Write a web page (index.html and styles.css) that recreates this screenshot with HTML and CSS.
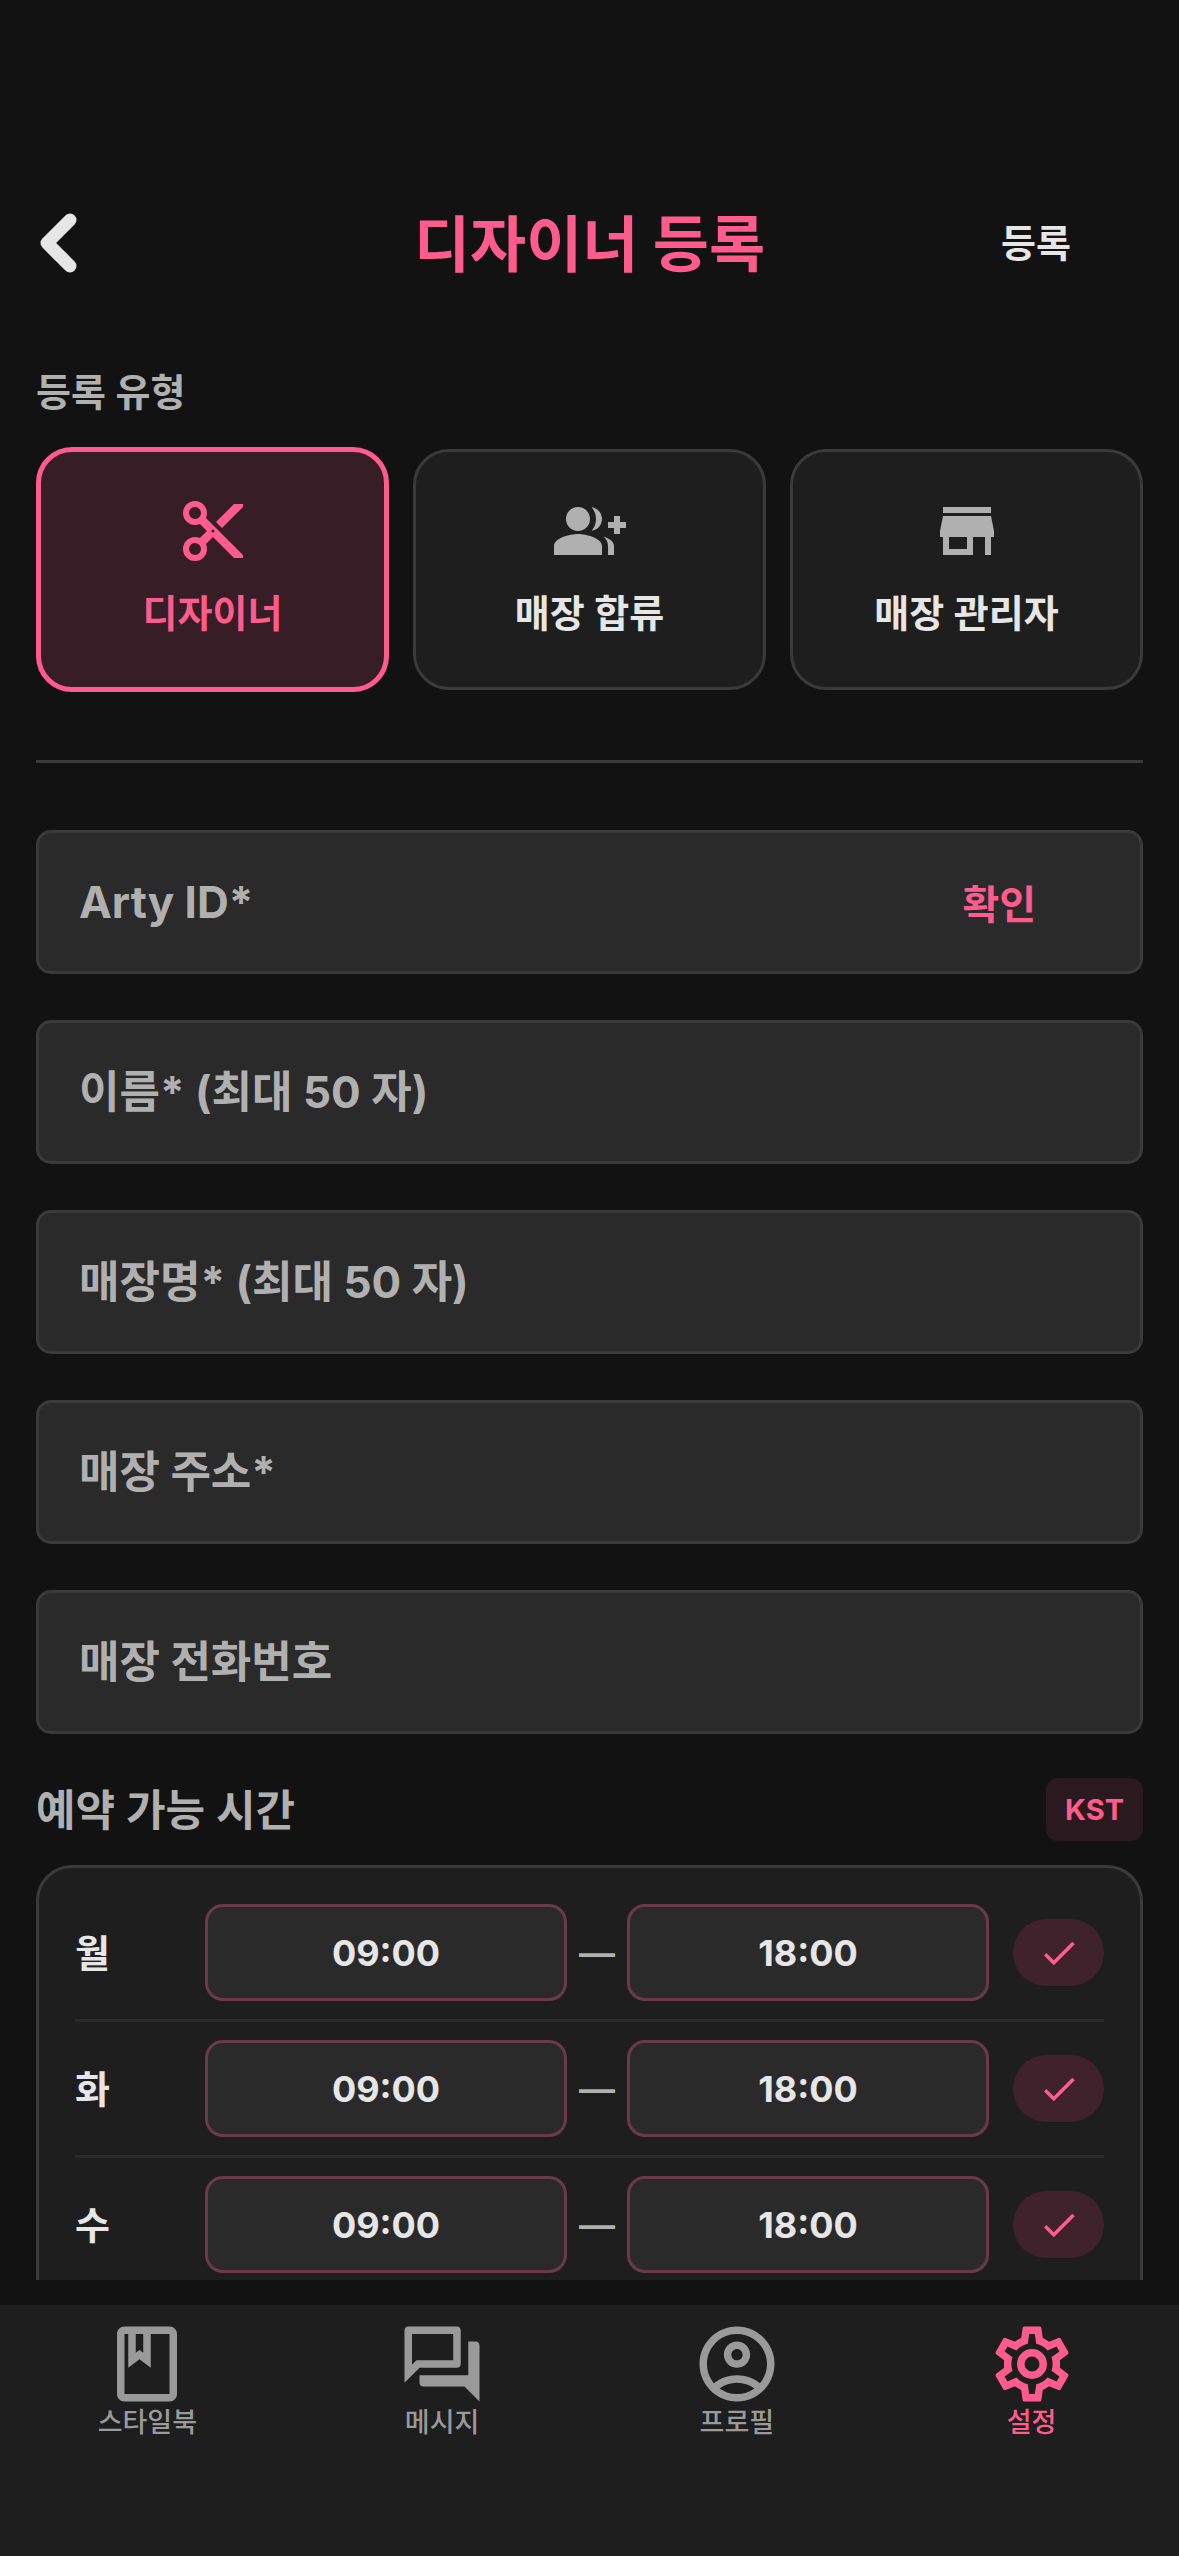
FILE: index.html
```html
<!DOCTYPE html>
<html lang="ko">
<head>
    <meta charset="UTF-8">
    <meta name="viewport" content="width=device-width, initial-scale=1.0">
    <title>디자이너 등록</title>
    <link rel="stylesheet" href="styles.css">
</head>
<body>
    <header class="header">
        <button type="button" class="back-button" aria-label="뒤로">
            <svg viewBox="0 0 38 60"><path d="M31 7L8 30L31 53"/></svg>
        </button>
        <h1>디자이너 등록</h1>
        <button type="submit" form="register-form" class="submit-button">등록</button>
    </header>

    <main>
        <form id="register-form">
            <fieldset class="types">
                <legend>등록 유형</legend>
                <div class="type-list">
                    <label class="type-card">
                        <input type="radio" name="type" class="hidden-input" checked>
                        <svg viewBox="0 0 24 24"><path d="M19,3L13,9L15,11L22,4V3M12,12.5A0.5,0.5 0 0,1 11.5,12A0.5,0.5 0 0,1 12,11.5A0.5,0.5 0 0,1 12.5,12A0.5,0.5 0 0,1 12,12.5M6,20A2,2 0 0,1 4,18C4,16.89 4.9,16 6,16A2,2 0 0,1 8,18C8,19.11 7.1,20 6,20M6,8A2,2 0 0,1 4,6C4,4.89 4.9,4 6,4A2,2 0 0,1 8,6C8,7.11 7.1,8 6,8M9.64,7.64C9.87,7.14 10,6.59 10,6A4,4 0 0,0 6,2A4,4 0 0,0 2,6A4,4 0 0,0 6,10C6.59,10 7.14,9.87 7.64,9.64L10,12L7.64,14.36C7.14,14.13 6.59,14 6,14A4,4 0 0,0 2,18A4,4 0 0,0 6,22A4,4 0 0,0 10,18C10,17.41 9.87,16.86 9.64,16.36L12,14L19,21H22V20L9.64,7.64Z"/></svg>
                        <span>디자이너</span>
                    </label>
                    <label class="type-card">
                        <input type="radio" name="type" class="hidden-input">
                        <svg viewBox="0 0 24 24"><path d="M22 9V7h-2v2h-2v2h2v2h2v-2h2V9zM8 12c2.21 0 4-1.79 4-4s-1.79-4-4-4-4 1.79-4 4 1.79 4 4 4zM8 13c-2.67 0-8 1.34-8 4v3h16v-3c0-2.66-5.33-4-8-4zM12.51 4.05C13.43 5.11 14 6.49 14 8s-.57 2.89-1.49 3.95C14.47 11.7 16 10.04 16 8s-1.53-3.7-3.49-3.95zM16.53 13.83C17.42 14.66 18 15.7 18 17v3h2v-3c0-1.45-1.59-2.51-3.47-3.17z"/></svg>
                        <span>매장 합류</span>
                    </label>
                    <label class="type-card">
                        <input type="radio" name="type" class="hidden-input">
                        <svg viewBox="0 0 24 24"><path d="M20 4H4v2h16V4zm1 10v-2l-1-5H4l-1 5v2h1v6h10v-6h4v6h2v-6h1zm-9 4H6v-4h6v4z"/></svg>
                        <span>매장 관리자</span>
                    </label>
                </div>
            </fieldset>

            <hr>

            <div class="fields">
                <div class="field">
                    <input type="text" placeholder="Arty ID*" aria-label="Arty ID">
                    <button type="button" class="check-button">확인</button>
                </div>
                <div class="field">
                    <input type="text" placeholder="이름* (최대 50 자)" aria-label="이름" maxlength="50">
                </div>
                <div class="field">
                    <input type="text" placeholder="매장명* (최대 50 자)" aria-label="매장명" maxlength="50">
                </div>
                <div class="field">
                    <input type="text" placeholder="매장 주소*" aria-label="매장 주소">
                </div>
                <div class="field">
                    <input type="tel" placeholder="매장 전화번호" aria-label="매장 전화번호">
                </div>
            </div>

            <div class="section-head">
                <h2>예약 가능 시간</h2>
                <span class="badge">KST</span>
            </div>

            <div class="hours">
                <div class="hours-row">
                    <span class="day">월</span>
                    <button type="button" class="time">09:00</button>
                    <span class="dash">—</span>
                    <button type="button" class="time">18:00</button>
                    <label class="toggle">
                        <input type="checkbox" class="hidden-input" aria-label="월" checked>
                        <svg viewBox="0 0 24 24"><path d="M9 16.17L4.83 12l-1.42 1.41L9 19 21 7l-1.41-1.41z"/></svg>
                    </label>
                </div>
                <div class="hours-row">
                    <span class="day">화</span>
                    <button type="button" class="time">09:00</button>
                    <span class="dash">—</span>
                    <button type="button" class="time">18:00</button>
                    <label class="toggle">
                        <input type="checkbox" class="hidden-input" aria-label="화" checked>
                        <svg viewBox="0 0 24 24"><path d="M9 16.17L4.83 12l-1.42 1.41L9 19 21 7l-1.41-1.41z"/></svg>
                    </label>
                </div>
                <div class="hours-row">
                    <span class="day">수</span>
                    <button type="button" class="time">09:00</button>
                    <span class="dash">—</span>
                    <button type="button" class="time">18:00</button>
                    <label class="toggle">
                        <input type="checkbox" class="hidden-input" aria-label="수" checked>
                        <svg viewBox="0 0 24 24"><path d="M9 16.17L4.83 12l-1.42 1.41L9 19 21 7l-1.41-1.41z"/></svg>
                    </label>
                </div>
            </div>
        </form>
    </main>

    <nav class="tabbar">
        <a href="#">
            <svg viewBox="0 0 24 24"><path d="M18 2H6c-1.1 0-2 .9-2 2v16c0 1.1.9 2 2 2h12c1.1 0 2-.9 2-2V4c0-1.1-.9-2-2-2zM9 4h2v5l-1-.75L9 9V4zm9 16H6V4h1v9l3-2.25L13 13V4h5v16z"/></svg>
            <span>스타일북</span>
        </a>
        <a href="#">
            <svg viewBox="0 0 24 24"><path d="M15 4v7H5.17L4 12.17V4h11m1-2H3c-.55 0-1 .45-1 1v14l4-4h10c.55 0 1-.45 1-1V3c0-.55-.45-1-1-1zm5 4h-2v9H6v2c0 .55.45 1 1 1h11l4 4V7c0-.55-.45-1-1-1z"/></svg>
            <span>메시지</span>
        </a>
        <a href="#">
            <svg viewBox="0 0 24 24"><path d="M12 2C6.48 2 2 6.48 2 12s4.48 10 10 10 10-4.48 10-10S17.52 2 12 2zM7.35 18.5C8.66 17.56 10.26 17 12 17s3.34.56 4.65 1.5C15.34 19.44 13.74 20 12 20s-3.34-.56-4.65-1.5zm10.79-1.38C16.45 15.8 14.32 15 12 15s-4.45.8-6.14 2.12C4.7 15.73 4 13.95 4 12c0-4.42 3.58-8 8-8s8 3.58 8 8c0 1.95-.7 3.73-1.86 5.12zM12 6c-1.93 0-3.5 1.57-3.5 3.5S10.07 13 12 13s3.5-1.57 3.5-3.5S13.93 6 12 6zm0 5c-.83 0-1.5-.67-1.5-1.5S11.17 8 12 8s1.5.67 1.5 1.5S12.83 11 12 11z"/></svg>
            <span>프로필</span>
        </a>
        <a href="#" class="active">
            <svg viewBox="0 0 24 24"><path d="M12,8A4,4 0 0,1 16,12A4,4 0 0,1 12,16A4,4 0 0,1 8,12A4,4 0 0,1 12,8M12,10A2,2 0 0,0 10,12A2,2 0 0,0 12,14A2,2 0 0,0 14,12A2,2 0 0,0 12,10M10,22C9.75,22 9.54,21.82 9.5,21.58L9.13,18.93C8.5,18.68 7.96,18.34 7.44,17.94L4.95,18.95C4.73,19.03 4.46,18.95 4.34,18.73L2.34,15.27C2.21,15.05 2.27,14.78 2.46,14.63L4.57,12.97L4.5,12L4.57,11L2.46,9.37C2.27,9.22 2.21,8.95 2.34,8.73L4.34,5.27C4.46,5.05 4.73,4.96 4.95,5.05L7.44,6.05C7.96,5.66 8.5,5.32 9.13,5.07L9.5,2.42C9.54,2.18 9.75,2 10,2H14C14.25,2 14.46,2.18 14.5,2.42L14.87,5.07C15.5,5.32 16.04,5.66 16.56,6.05L19.05,5.05C19.27,4.96 19.54,5.05 19.66,5.27L21.66,8.73C21.79,8.95 21.73,9.22 21.54,9.37L19.43,11L19.5,12L19.43,13L21.54,14.63C21.73,14.78 21.79,15.05 21.66,15.27L19.66,18.73C19.54,18.95 19.27,19.04 19.05,18.95L16.56,17.95C16.04,18.34 15.5,18.68 14.87,18.93L14.5,21.58C14.46,21.82 14.25,22 14,22H10M11.25,4L10.88,6.61C9.68,6.86 8.62,7.5 7.85,8.39L5.44,7.35L4.69,8.65L6.8,10.2C6.4,11.37 6.4,12.64 6.8,13.8L4.68,15.36L5.43,16.66L7.86,15.62C8.63,16.5 9.68,17.14 10.87,17.38L11.24,20H12.76L13.13,17.39C14.32,17.14 15.37,16.5 16.14,15.62L18.57,16.66L19.32,15.36L17.2,13.81C17.6,12.64 17.6,11.37 17.2,10.2L19.31,8.65L18.56,7.35L16.15,8.39C15.38,7.5 14.32,6.86 13.12,6.62L12.75,4H11.25Z"/></svg>
            <span>설정</span>
        </a>
    </nav>
</body>
</html>
```
FILE: styles.css
```css
* {
    box-sizing: border-box;
}

body {
    background-color: #121212;
    color: #e6e6e6;
    font-family: Inter, 'Noto Sans CJK KR', sans-serif;
    font-size: 36px;
    font-weight: 600;
    margin: 0;
    height: 100vh;
    display: flex;
    flex-direction: column;
}

button, input {
    font: inherit;
    color: inherit;
    background: none;
    border: none;
    margin: 0;
    padding: 0;
}

button {
    cursor: pointer;
}

svg {
    display: block;
    fill: currentColor;
}

.hidden-input {
    position: absolute;
    opacity: 0;
    pointer-events: none;
}

/* Header */
.header {
    display: grid;
    grid-template-columns: 1fr auto 1fr;
    align-items: center;
    height: 306px;
    padding: 180px 36px 0;
}

.header h1 {
    margin: 0;
    padding-top: 4px;
    color: #ff5c8d;
    font-size: 61px;
    font-weight: 700;
    line-height: 72px;
}

.back-button {
    justify-self: start;
    padding: 0 3px;
}

.back-button svg {
    width: 38px;
    height: 60px;
    fill: none;
    stroke: currentColor;
    stroke-width: 13;
    stroke-linecap: round;
    stroke-linejoin: round;
}

.submit-button {
    justify-self: end;
    padding: 0 72px;
    font-size: 38px;
    line-height: 44px;
}

/* Form */
main {
    flex: 1;
    min-height: 0;
    overflow: hidden;
    padding: 60px 36px 0;
}

.types {
    border: none;
    margin: 0;
    padding: 0;
    min-width: 0;
}

.types legend {
    padding: 0;
    margin-bottom: 29px;
    color: #b0b0b0;
    font-size: 38px;
    line-height: 52px;
}

.type-list {
    display: grid;
    grid-template-columns: repeat(3, 1fr);
    align-items: center;
    gap: 24px;
}

.type-card {
    display: flex;
    flex-direction: column;
    align-items: center;
    gap: 24px;
    padding: 43px 12px 52px;
    background-color: #1e1e1e;
    border: 3px solid #3a3a3a;
    border-radius: 36px;
    font-size: 38px;
    line-height: 44px;
    cursor: pointer;
}

.type-card svg {
    width: 72px;
    height: 72px;
    color: #b0b0b0;
}

.type-card:has(input:checked) {
    background-color: #371e26;
    border: 5px solid #ff5c8d;
    color: #ff5c8d;
}

.type-card:has(input:checked) svg {
    color: #ff5c8d;
}

hr {
    margin: 68px 0 67px;
    border: none;
    border-top: 3px solid #3a3a3a;
}

.fields {
    display: flex;
    flex-direction: column;
    gap: 46px;
}

.field {
    display: flex;
    height: 144px;
    background-color: #2a2a2a;
    border: 3px solid #3a3a3a;
    border-radius: 15px;
    font-size: 44px;
    font-weight: 700;
}

.field input {
    flex: 1;
    min-width: 0;
    padding: 0 40px;
    outline: none;
}

.field input::placeholder {
    color: #b0b0b0;
    opacity: 1;
}

.check-button {
    padding: 0 104px 0 24px;
    color: #ff5c8d;
    font-size: 40px;
}

/* Opening hours */
.section-head {
    display: flex;
    align-items: center;
    justify-content: space-between;
    margin: 44px 0 24px;
}

.section-head h2 {
    margin: 0;
    color: #b0b0b0;
    font-size: 43px;
    font-weight: 600;
    line-height: 60px;
}

.badge {
    padding: 0 19px;
    background-color: #2a1a20;
    border-radius: 12px;
    color: #ff5c8d;
    font-size: 29px;
    font-weight: 700;
    line-height: 63px;
}

.hours {
    padding: 18px 36px 36px;
    background-color: #1e1e1e;
    border: 3px solid #3a3a3a;
    border-radius: 36px;
}

.hours-row {
    display: flex;
    align-items: center;
    padding: 18px 0;
    border-bottom: 3px solid #2a2a2a;
}

.hours-row:last-child {
    border-bottom: none;
}

.day {
    width: 130px;
    font-size: 38px;
    line-height: 44px;
}

.time {
    flex: 1;
    height: 97px;
    background-color: #2a2a2a;
    border: 3px solid #6b394a;
    border-radius: 18px;
    font-weight: 700;
}

.dash {
    width: 60px;
    color: #b0b0b0;
    text-align: center;
}

.toggle {
    display: flex;
    align-items: center;
    justify-content: center;
    width: 91px;
    height: 67px;
    margin-left: 24px;
    background-color: #3f222c;
    border-radius: 36px;
    color: #ff5c8d;
    cursor: pointer;
}

.toggle svg {
    width: 42px;
    height: 42px;
    visibility: hidden;
}

.toggle input:checked + svg {
    visibility: visible;
}

/* Bottom tabs */
.tabbar {
    display: flex;
    margin-top: 25px;
    padding: 14px 0 119px;
    background-color: #1e1e1e;
}

.tabbar a {
    flex: 1;
    display: flex;
    flex-direction: column;
    align-items: center;
    color: #9a9a9a;
    font-size: 27px;
    font-weight: 500;
    line-height: 28px;
    text-decoration: none;
}

.tabbar svg {
    width: 90px;
    height: 90px;
}

.tabbar .active {
    color: #ff5c8d;
}
```
